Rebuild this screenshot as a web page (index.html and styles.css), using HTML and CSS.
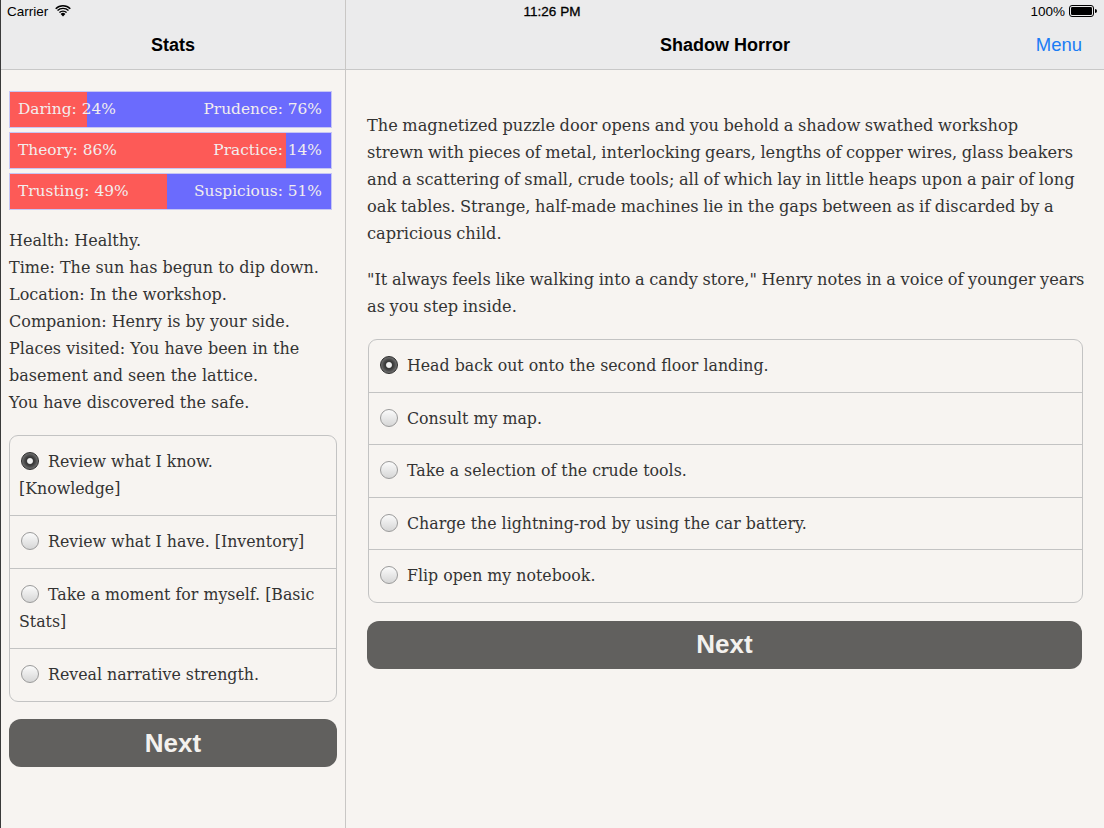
FILE: index.html
```html
<!DOCTYPE html>
<html>
<head>
<meta charset="utf-8">
<link rel="stylesheet" href="styles.css">
</head>
<body>
<div class="app">
  <div class="statusbar">
    <div class="sb-left">Carrier
      <svg class="wifi" width="16" height="12" viewBox="0 0 16 12"><path d="M8 11.5 L5.6 8.9 A3.4 3.4 0 0 1 10.4 8.9 Z" fill="#000"/><path d="M3.9 7.1 A5.9 5.9 0 0 1 12.1 7.1 L11.1 8.1 A4.5 4.5 0 0 0 4.9 8.1 Z" fill="#000"/><path d="M2 5.1 A8.6 8.6 0 0 1 14 5.1 L13 6.1 A7.2 7.2 0 0 0 3 6.1 Z" fill="#000"/><path d="M0.2 3.2 A11.2 11.2 0 0 1 15.8 3.2 L14.8 4.2 A9.8 9.8 0 0 0 1.2 4.2 Z" fill="#000"/></svg>
    </div>
    <div class="sb-time">11:26 PM</div>
    <div class="sb-right">100%
      <svg class="battery" width="28" height="12" viewBox="0 0 28 12"><rect x="0.5" y="0.5" width="24" height="11" rx="2.5" fill="none" stroke="#000" stroke-width="1"/><rect x="2" y="2" width="21" height="8" rx="1.2" fill="#000"/><path d="M26 4 A2 2 0 0 1 26 8 Z" fill="#000"/></svg>
    </div>
  </div>

  <section class="panel left">
    <header class="nav"><h1 class="nav-title">Stats</h1></header>
    <div class="content left-content">
      <div class="bars">
        <div class="bar"><div class="bar-fill" style="width:24%"></div><span class="bar-l">Daring: 24%</span><span class="bar-r">Prudence: 76%</span></div>
        <div class="bar"><div class="bar-fill" style="width:86%"></div><span class="bar-l">Theory: 86%</span><span class="bar-r">Practice: 14%</span></div>
        <div class="bar"><div class="bar-fill" style="width:49%"></div><span class="bar-l">Trusting: 49%</span><span class="bar-r">Suspicious: 51%</span></div>
      </div>
      <div class="stats-text">
        <p>Health: Healthy.</p>
        <p>Time: The sun has begun to dip down.</p>
        <p>Location: In the workshop.</p>
        <p>Companion: Henry is by your side.</p>
        <p>Places visited: You have been in the basement and seen the lattice.</p>
        <p>You have discovered the safe.</p>
      </div>
      <ul class="choices narrow">
        <li><span class="radio on"></span>Review what I know. [Knowledge]</li>
        <li><span class="radio"></span>Review what I have. [Inventory]</li>
        <li><span class="radio"></span>Take a moment for myself. [Basic Stats]</li>
        <li><span class="radio"></span>Reveal narrative strength.</li>
      </ul>
      <button class="next">Next</button>
    </div>
  </section>

  <section class="panel right">
    <header class="nav"><h1 class="nav-title">Shadow Horror</h1><span class="nav-menu">Menu</span></header>
    <div class="content right-content">
      <p class="story">The magnetized puzzle door opens and you behold a shadow swathed workshop<br>strewn with pieces of metal, interlocking gears, lengths of copper wires, glass beakers<br>and a scattering of small, crude tools; all of which lay in little heaps upon a pair of long<br>oak tables. Strange, half-made machines lie in the gaps between as if discarded by a<br>capricious child.</p>
      <p class="story">"It always feels like walking into a candy store," Henry notes in a voice of younger years<br>as you step inside.</p>
      <ul class="choices wide">
        <li><span class="radio on"></span>Head back out onto the second floor landing.</li>
        <li><span class="radio"></span>Consult my map.</li>
        <li><span class="radio"></span>Take a selection of the crude tools.</li>
        <li><span class="radio"></span>Charge the lightning-rod by using the car battery.</li>
        <li><span class="radio"></span>Flip open my notebook.</li>
      </ul>
      <button class="next">Next</button>
    </div>
  </section>
</div>
</body>
</html>
```

FILE: styles.css
```css
* { box-sizing: border-box; }
html, body { margin: 0; padding: 0; }
body {
  width: 1104px;
  height: 828px;
  overflow: hidden;
  background: #f7f4f1;
  font-family: "DejaVu Serif", "Liberation Serif", serif;
  color: #333;
}
.app {
  position: relative;
  display: flex;
  width: 1104px;
  height: 828px;
  border-left: 1px solid #3a3a3a;
}
.statusbar {
  position: absolute;
  left: 0; top: 0; right: 0;
  height: 22px;
  display: flex;
  align-items: center;
  justify-content: space-between;
  padding: 0 7px 0 6px;
  font-family: "Liberation Sans", Arial, sans-serif;
  font-size: 13.5px;
  color: #000;
  z-index: 2;
}
.sb-left, .sb-right { display: flex; align-items: center; gap: 6px; width: 150px; }
.sb-right { justify-content: flex-end; gap: 4px; }
.wifi { margin-left: 1px; }
.sb-time { font-size: 13.5px; font-weight: 500; -webkit-text-stroke: 0.3px #000; }
.panel { display: flex; flex-direction: column; height: 100%; }
.left { width: 345px; border-right: 1px solid #c9c7c5; }
.right { flex: 1; }
.nav {
  position: relative;
  height: 70px;
  padding-top: 22px;
  background: #ebebec;
  border-bottom: 1px solid #c8c8c8;
  display: flex;
  align-items: center;
  justify-content: center;
}
.nav-title {
  margin: 0;
  font-family: "Liberation Sans", Arial, sans-serif;
  font-weight: bold;
  font-size: 18px;
  color: #000;
}
.nav-menu {
  position: absolute;
  right: 22px;
  top: 34px;
  font-family: "Liberation Sans", Arial, sans-serif;
  font-size: 18.5px;
  color: #1a7cf5;
}
.left-content { padding: 21px 8px 0 8px; }
.bars { display: flex; flex-direction: column; gap: 4px; width: 323px; }
.bar {
  position: relative;
  height: 37px;
  background: #6b6bfd;
  border: 1px solid #c6c6f4;
  display: flex;
  align-items: center;
  justify-content: space-between;
  padding: 0 9px 1px 8px;
  font-size: 15.4px;
  color: #f2eeee;
}
.bar-fill { position: absolute; left: 0; top: 0; bottom: 0; background: #fd5a57; }
.bar-l, .bar-r { position: relative; }
.stats-text { margin-top: 17px; font-size: 16px; line-height: 27px; width: 330px; }
.stats-text p { margin: 0; }
.choices {
  list-style: none;
  margin: 19px 0 0 0;
  padding: 0;
  border: 1px solid #c3c3c3;
  border-radius: 9px;
  font-size: 15.8px;
  line-height: 27px;
}
.narrow { width: 328px; }
.narrow li { padding-right: 19px; }
.choices li {
  padding-top: 12px;
  padding-bottom: 13px;
  padding-left: 9px;
  border-top: 1px solid #c3c3c3;
}
.wide li { padding-right: 10px; padding-bottom: 12.6px; }
.choices li:first-child { border-top: none; }
.radio {
  display: inline-block;
  width: 18px;
  height: 18px;
  margin: 0 9px 0 2px;
  vertical-align: -3px;
  border-radius: 50%;
  border: 1px solid #9a9a9a;
  background: linear-gradient(#fbfbfb, #d6d6d6);
}
.radio.on {
  border: 1px solid #2a2a2a;
  background: radial-gradient(circle at 50% 50%, #f0f0f0 0, #f0f0f0 2.4px, #333 3.6px, #4a4a4a 5.5px, #7a7a7a 8.5px);
}
.next {
  display: block;
  width: 328px;
  height: 48px;
  margin-top: 17px;
  border: none;
  border-radius: 12px;
  background: #61605e;
  color: #f3f1ee;
  font-family: "Liberation Sans", Arial, sans-serif;
  font-weight: bold;
  font-size: 26px;
  padding: 0;
}
.right-content { padding: 42px 7px 0 21px; }
.story { margin: 0 0 19px 0; font-size: 16.2px; line-height: 27px; word-spacing: -0.6px; }
.wide { margin-top: 0; width: 715px; margin-left: 1px; }
.right .next { width: 715px; margin-top: 18px; }
```
